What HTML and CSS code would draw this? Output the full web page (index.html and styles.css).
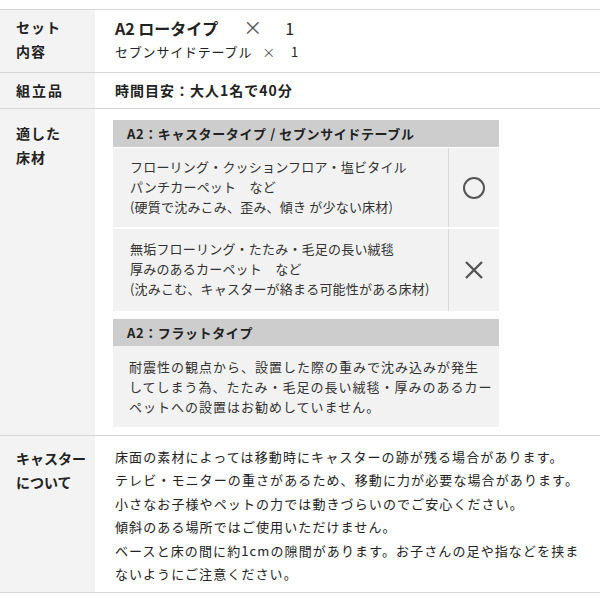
FILE: index.html
```html
<!DOCTYPE html>
<html>
  <head>
    <title>商品仕様</title>
    <link rel="stylesheet" href="styles.css">
  </head>
  <body>
    <div class="spec">
      <div class="row row-set">
        <div class="label">セット<br>内容</div>
        <div class="value">
          <p class="set-main"><b>A2 ロータイプ</b><span class="times">×</span><span class="qty">1</span></p>
          <p class="set-sub">セブンサイドテーブル<span class="times">×</span><span class="qty">1</span></p>
        </div>
      </div>

      <div class="row row-assembly">
        <div class="label">組立品</div>
        <div class="value">時間目安：大人1名で40分</div>
      </div>

      <div class="row row-floor">
        <div class="label">適した<br>床材</div>
        <div class="value">
          <div class="floor-box">
            <div class="floor-head">A2：キャスタータイプ / セブンサイドテーブル</div>
            <div class="floor-item">
              <div class="floor-text">フローリング・クッションフロア・塩ビタイル<br>パンチカーペット　など<br>(硬質で沈みこみ、歪み、傾き が少ない床材)</div>
              <div class="floor-mark">
                <svg width="24" height="24" viewBox="0 0 24 24"><circle cx="12" cy="12" r="10" fill="none" stroke="#555" stroke-width="2"/></svg>
              </div>
            </div>
            <div class="floor-item">
              <div class="floor-text">無垢フローリング・たたみ・毛足の長い絨毯<br>厚みのあるカーペット　など<br>(沈みこむ、キャスターが絡まる可能性がある床材)</div>
              <div class="floor-mark">
                <svg width="20" height="20" viewBox="0 0 20 20"><path d="M2 2 L18 18 M18 2 L2 18" stroke="#555" stroke-width="2.4" fill="none"/></svg>
              </div>
            </div>
          </div>

          <div class="floor-box flat">
            <div class="floor-head">A2：フラットタイプ</div>
            <div class="floor-note">耐震性の観点から、設置した際の重みで沈み込みが発生<br>してしまう為、たたみ・毛足の長い絨毯・厚みのあるカー<br>ペットへの設置はお勧めしていません。</div>
          </div>
        </div>
      </div>

      <div class="row row-caster">
        <div class="label">キャスター<br>について</div>
        <div class="value">
          床面の素材によっては移動時にキャスターの跡が残る場合があります。<br>
          テレビ・モニターの重さがあるため、移動に力が必要な場合があります。<br>
          小さなお子様やペットの力では動きづらいのでご安心ください。<br>
          傾斜のある場所ではご使用いただけません。<br>
          ベースと床の間に約1cmの隙間があります。お子さんの足や指などを挟ま<br>
          ないようにご注意ください。
        </div>
      </div>
    </div>
  </body>
</html>
```

FILE: styles.css
```css
* {
  box-sizing: border-box;
}

body {
  margin: 0;
  padding: 0;
  font-family: "Noto Sans CJK JP", sans-serif;
  color: #333;
  background: #fff;
}

p {
  margin: 0;
}

.spec {
  padding-top: 9px;
}

.row {
  display: grid;
  grid-template-columns: 95px 1fr;
  border-top: 1px solid #d6d6d6;
}

.row:last-child {
  border-bottom: 1px solid #d6d6d6;
}

.label {
  background-color: #f3f3f3;
  padding-left: 16px;
  font-size: 14px;
  font-weight: 700;
  line-height: 24px;
  letter-spacing: 1px;
  color: #222;
}

.value {
  padding-left: 20px;
  padding-right: 16px;
  font-size: 13px;
  line-height: 24px;
  color: #222;
}

/* セット内容 */
.row-set .label,
.row-set .value {
  padding-top: 5px;
  padding-bottom: 8px;
}

.set-main {
  font-size: 16px;
}

.set-main b {
  font-weight: 700;
}

.set-main .times {
  margin-left: 25px;
  font-size: 19px;
  color: #555;
}

.set-main .qty {
  margin-left: 23px;
}

.set-sub {
  letter-spacing: 0.8px;
}

.set-sub .times {
  margin-left: 10px;
  color: #555;
}

.set-sub .qty {
  margin-left: 15px;
}

/* 組立品 */
.row-assembly .label,
.row-assembly .value {
  padding-top: 5px;
  padding-bottom: 6px;
}

.row-assembly .label {
  letter-spacing: 2px;
}

.row-assembly .value {
  font-weight: 700;
  font-size: 14px;
  letter-spacing: 1px;
}

/* 適した床材 */
.row-floor .label {
  padding-top: 12px;
}

.row-floor .value {
  padding-left: 18px;
  padding-right: 101px;
  padding-top: 11px;
  padding-bottom: 8px;
}

.floor-box + .floor-box {
  margin-top: 8px;
}

.floor-head {
  background-color: #cdcdcd;
  padding-left: 14px;
  height: 27px;
  line-height: 27px;
  font-weight: 700;
  font-size: 13px;
  letter-spacing: 0.6px;
  color: #222;
}

.floor-item {
  display: grid;
  grid-template-columns: 1fr 50px;
  background-color: #f2f2f2;
  margin-top: 1px;
}

.floor-item + .floor-item {
  margin-top: 2px;
}

.floor-text {
  padding: 9px 0 10px 17px;
  font-size: 13px;
  line-height: 20px;
  letter-spacing: 0.2px;
  color: #333;
  border-right: 1px solid #d9d9d9;
}

.floor-item + .floor-item .floor-text {
  padding-top: 10px;
  padding-bottom: 12px;
}

.floor-mark {
  display: flex;
  align-items: center;
  justify-content: center;
}

.floor-note {
  background-color: #f2f2f2;
  padding: 11px 4px 10px 16px;
  font-size: 13px;
  line-height: 20px;
  letter-spacing: 1px;
  color: #333;
}

/* キャスター */
.row-caster .label {
  padding-top: 10px;
  letter-spacing: 0;
}

.row-caster .value {
  padding-top: 9px;
  padding-bottom: 7px;
  line-height: 23.4px;
  letter-spacing: 1.1px;
}
```
